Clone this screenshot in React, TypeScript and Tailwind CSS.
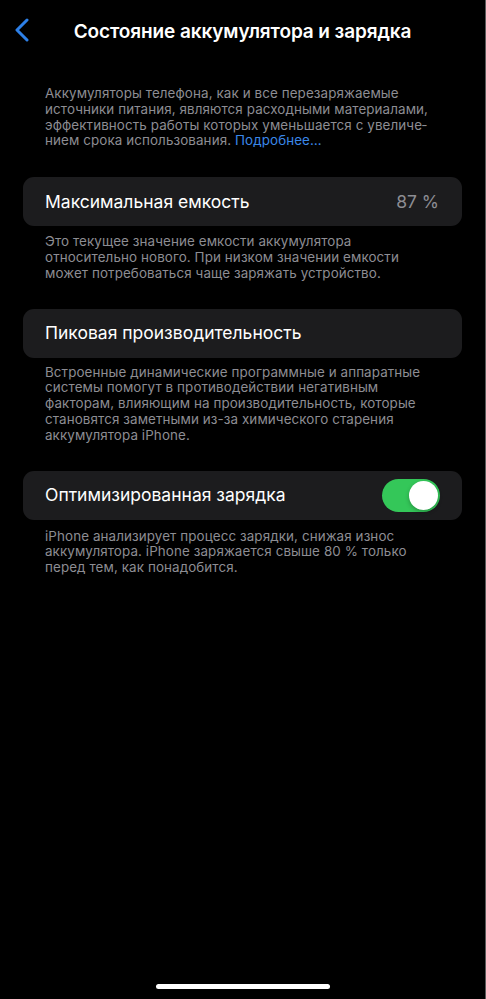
import { ReactNode } from "react";

const FONT = { fontFamily: 'Inter, "Noto Sans", "Liberation Sans", sans-serif' };

function Card({ children }: { children: ReactNode }) {
  return (
    <div className="mx-[23px] flex h-[49px] items-center justify-between rounded-[11px] bg-[#1c1c1e] pl-[22px] pr-[23px]">
      {children}
    </div>
  );
}

function Footnote({ children, className = "" }: { children: ReactNode; className?: string }) {
  return (
    <p className={`px-[45px] text-[13.4px] leading-[15.8px] tracking-[0.1px] text-[#8d8d93] ${className}`}>
      {children}
    </p>
  );
}

function Toggle() {
  return (
    <div className="flex h-[33px] w-[58px] items-center justify-end rounded-full bg-[#34c759] p-[2px]">
      <div className="h-[29px] w-[29px] rounded-full bg-white shadow-[0_2px_4px_rgba(0,0,0,0.25)]" />
    </div>
  );
}

export default function App() {
  return (
    <div style={FONT} className="flex h-[999px] w-[486px] flex-col border-r border-[#5a5a5a] bg-black text-white antialiased">
      {/* nav bar */}
      <div className="relative flex h-[64px] items-center justify-center">
        <svg className="absolute left-[14px] top-[18px]" width="16" height="24" viewBox="0 0 16 24" fill="none">
          <path d="M13 2 L3 12 L13 22" stroke="#2d80e8" strokeWidth="3" strokeLinecap="round" strokeLinejoin="round" />
        </svg>
        <h1 className="text-[19px] font-semibold tracking-[-0.1px]">Состояние аккумулятора и зарядка</h1>
      </div>

      <Footnote className="mt-[22px]">
        Аккумуляторы телефона, как и все перезаряжаемые источники питания, являются расходными материалами,
        эффективность работы которых уменьшается с увеличе­нием срока использования.{" "}
        <span className="text-[#3a87e8]">Подробнее…</span>
      </Footnote>

      <div className="mt-[28px]">
        <Card>
          <span className="text-[17.5px]">Максимальная емкость</span>
          <span className="text-[17.5px] text-[#8d8d93]">87 %</span>
        </Card>
      </div>
      <Footnote className="mt-[8px]">
        Это текущее значение емкости аккумулятора относительно нового. При низком значении емкости может
        потребоваться чаще заряжать устройство.
      </Footnote>

      <div className="mt-[27px]">
        <Card>
          <span className="text-[17.5px]">Пиковая производительность</span>
        </Card>
      </div>
      <Footnote className="mt-[7px]">
        Встроенные динамические программные и аппаратные системы помогут в противодействии негативным факторам,
        влияющим на производительность, которые становятся заметными из-за химического старения аккумулятора
        iPhone.
      </Footnote>

      <div className="mt-[27px]">
        <Card>
          <span className="text-[17.5px]">Оптимизированная зарядка</span>
          <div className="-mr-[1px]">
            <Toggle />
          </div>
        </Card>
      </div>
      <Footnote className="mt-[9px]">
        iPhone анализирует процесс зарядки, снижая износ аккумулятора. iPhone заряжается свыше 80 % только
        перед тем, как понадобится.
      </Footnote>

      {/* home indicator */}
      <div className="mt-auto flex justify-center pb-[10px]">
        <div className="h-[5px] w-[174px] rounded-full bg-white" />
      </div>
    </div>
  );
}
